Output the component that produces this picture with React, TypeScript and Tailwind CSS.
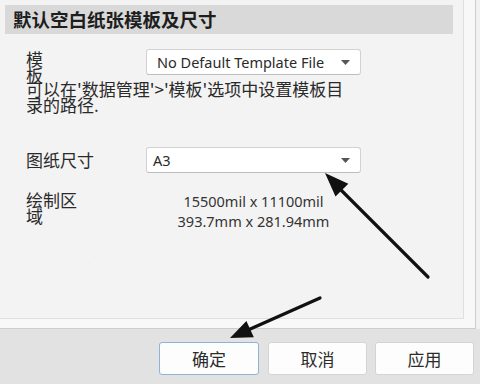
import React from "react";

const cjk = { fontFamily: '"Noto Sans CJK SC", "Noto Sans", sans-serif' };
const latin = { fontFamily: '"Noto Sans", "Noto Sans CJK SC", sans-serif' };

function Caret() {
  return (
    <svg width="9" height="5" viewBox="0 0 9 5" className="shrink-0">
      <path d="M0 0 L9 0 L4.5 5 Z" fill="#555" />
    </svg>
  );
}

function Select({ text, pl }: { text: string; pl: string }) {
  return (
    <div
      className={`w-[215px] h-[26px] bg-white border border-[#d2d2d2] border-b-[#bdbdbd] rounded-[3px] flex items-center justify-between pr-[10px] ${pl}`}
    >
      <span className="text-[14.5px] text-[#2a2a2a] leading-none" style={latin}>
        {text}
      </span>
      <Caret />
    </div>
  );
}

function Btn({ label, primary, w }: { label: string; primary?: boolean; w: string }) {
  return (
    <div
      className={`${w} h-[33px] rounded-[3px] bg-[#fdfdfd] flex items-center justify-center text-[17px] text-[#2b2b2b] border ${
        primary ? "border-[#8fb3d6]" : "border-[#d4d4d4]"
      }`}
      style={cjk}
    >
      {label}
    </div>
  );
}

export default function App() {
  return (
    <div className="relative w-[480px] h-[384px] overflow-hidden bg-[#e2e2e2] flex flex-col" style={cjk}>
      <div className="flex h-[329px] bg-[#f1f1f1]">
        <div className="w-[476px] h-[329px] bg-[#f8f8f8] border-r border-b border-[#cdcdcd]">
          <div className="w-[464px] h-[319px] bg-[#f3f3f3] border-r border-b border-[#e0e0e0] pt-[5px] pl-[5px]">
            <div className="w-[448px] h-[29px] bg-[#d9d9d9] flex items-center pl-[8px] text-[18.5px] font-bold text-[#1e1e1e]">
              默认空白纸张模板及尺寸
            </div>

            <div className="mt-[15px] flex items-start">
              <div className="w-[141px] pl-[21px] pt-[2px] text-[17px] leading-[16px] text-[#2a2a2a]">
                模<br />板
              </div>
              <Select text="No Default Template File" pl="pl-[10px]" />
            </div>
            <div className="pl-[21px] -mt-[2px] text-[17px] leading-[16px] text-[#2a2a2a]">
              可以在'数据管理'&gt;'模板'选项中设置模板目<br />录的路径.
            </div>

            <div className="mt-[34px] flex items-center">
              <div className="w-[141px] pl-[21px] text-[17px] leading-[16px] text-[#2a2a2a]">图纸尺寸</div>
              <Select text="A3" pl="pl-[6px]" />
            </div>

            <div className="mt-[19px] flex items-start">
              <div className="w-[141px] pl-[21px] text-[17px] leading-[16px] text-[#2a2a2a]">
                绘制区<br />域
              </div>
              <div className="w-[215px] text-center text-[14.5px] leading-[20px] text-[#333]" style={latin}>
                <div className="-mt-[1px]">15500mil x 11100mil</div>
                <div>393.7mm x 281.94mm</div>
              </div>
            </div>
          </div>
        </div>
      </div>

      <div className="flex justify-end items-start pt-[13px] pr-[6px]">
        <Btn label="确定" primary w="w-[100px]" />
        <div className="ml-[9px]">
          <Btn label="取消" w="w-[99px]" />
        </div>
        <div className="ml-[8px]">
          <Btn label="应用" w="w-[99px]" />
        </div>
      </div>

      {/* faint watermark */}
      <div className="absolute left-[0px] top-[235px] -rotate-[40deg] origin-left text-[44px] font-bold text-black/[0.025] whitespace-nowrap pointer-events-none">
        凡亿电路
      </div>
      <div className="absolute left-[40px] top-[300px] -rotate-[40deg] origin-left text-[10px] text-black/[0.03] whitespace-nowrap pointer-events-none" style={latin}>
        WWW.FANYEDU.COM
      </div>

      {/* annotation arrows */}
      <svg className="absolute inset-0 pointer-events-none" width="480" height="384" viewBox="0 0 480 384">
        <line x1="428" y1="277" x2="338" y2="187" stroke="#111" strokeWidth="3.2" strokeLinecap="round" />
        <path d="M325 173 L348.3 183.8 L335.5 196.4 Z" fill="#111" />
        <line x1="320" y1="298" x2="248" y2="330" stroke="#111" strokeWidth="3.2" strokeLinecap="round" />
        <path d="M230 338 L253.8 337.3 L246.4 320.9 Z" fill="#111" />
      </svg>
    </div>
  );
}
